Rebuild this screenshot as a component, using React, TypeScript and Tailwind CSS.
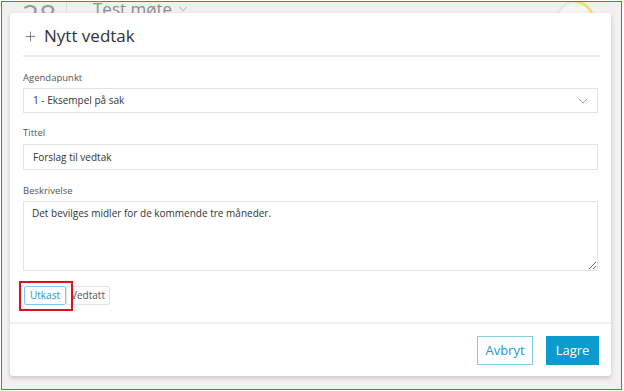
import { Plus, ChevronDown } from "lucide-react"

export default function App() {
  return (
    <div className="w-[624px] h-[391px] bg-white pt-px pl-px" style={{ fontFamily: '"Open Sans", sans-serif' }}>
      <div className="w-[621px] h-[389px] border border-[#4a72cf] bg-[#f1f0ef] overflow-hidden">
        {/* page behind the dialog */}
        <div className="h-[11px] flex items-start pl-[20px] pr-[20px] overflow-visible">
          <div className="text-[30px] leading-none text-[#9c9c9c] -mt-[2px] w-[32px]">28</div>
          <div className="w-px h-[40px] bg-[#dcdcdc] ml-[12px] -mt-[2px]" />
          <div className="flex items-center gap-1 ml-[26px] -mt-[6px] text-[17px] text-[#8d8d8d]">
            Test møte
            <ChevronDown className="w-[14px] h-[14px]" strokeWidth={1.2} />
          </div>
          <svg className="ml-auto -mt-[2px] mr-[6px]" width="40" height="40" viewBox="0 0 40 40">
            <circle cx="20" cy="20" r="18" fill="#f5f5f4" stroke="#e4e4e2" strokeWidth="2" />
            <path d="M20 2 A18 18 0 0 1 38 20" fill="none" stroke="#f6d978" strokeWidth="2.5" />
          </svg>
        </div>

        {/* dialog */}
        <div className="relative z-10 ml-[8px] w-[601px] h-[363px] bg-white rounded-[3px] shadow-[0_2px_4px_rgba(0,0,0,0.18)] flex flex-col">
          <div className="px-[13px] pr-[11px] pt-[10px]">
            <div className="h-[26px] flex items-center gap-[6px] text-[#333]">
              <Plus className="w-[15px] h-[15px] text-[#666]" strokeWidth={1.3} />
              <span className="text-[17px]">Nytt vedtak</span>
            </div>
            <div className="mt-[6px] h-[2px] bg-[#ebebeb]" />

            <div className="mt-[13px]">
              <div className="h-[16px] text-[9.5px] leading-[16px] text-[#555]">Agendapunkt</div>
              <div className="mt-[2px] h-[25px] mr-[2px] border border-[#e2e2e2] flex items-center justify-between pl-[9px] pr-[6px] text-[10px] text-[#333]">
                <span>1 - Eksempel på sak</span>
                <ChevronDown className="w-[16px] h-[16px] text-[#888]" strokeWidth={1.2} />
              </div>
            </div>

            <div className="mt-[12px]">
              <div className="h-[16px] text-[9.5px] leading-[16px] text-[#555]">Tittel</div>
              <div className="mt-[3px] h-[26px] mr-[2px] border border-[#e2e2e2] flex items-center pl-[9px] text-[10px] text-[#333]">
                Forslag til vedtak
              </div>
            </div>

            <div className="mt-[13px]">
              <div className="h-[16px] text-[9.5px] leading-[16px] text-[#555]">Beskrivelse</div>
              <textarea
                className="block mt-[2px] w-[575px] h-[70px] border border-[#e2e2e2] px-[8px] py-[4px] text-[10px] text-[#333] outline-none resize-y"
                style={{ fontFamily: '"Open Sans", sans-serif' }}
                defaultValue="Det bevilges midler for de kommende tre måneder."
              />
            </div>

            <div className="mt-[15px] h-[19px] flex items-center">
              <div className="relative flex ml-px">
                <button className="h-[19px] w-[42px] rounded-[2px] border border-[#7fcbea] text-[10px] text-[#2596cf]">
                  Utkast
                </button>
                <span className="absolute -left-[5px] -top-[5px] -right-[7px] -bottom-[6px] border-2 border-[#e0101a]" />
              </div>
              <button className="h-[19px] w-[44px] rounded-[2px] border border-[#e3e3e3] text-[10px] text-[#555]">
                Vedtatt
              </button>
            </div>
          </div>

          <div className="mt-[17px] border-t-2 border-[#eeeeee] flex justify-end gap-[13px] pt-[12px] pr-[12px]">
            <button className="h-[29px] w-[56px] border border-[#7fcbea] text-[13px] text-[#2596cf] bg-white">
              Avbryt
            </button>
            <button className="h-[29px] w-[53px] bg-[#0d9acf] text-[13px] text-white">
              Lagre
            </button>
          </div>
        </div>
      </div>
    </div>
  )
}
